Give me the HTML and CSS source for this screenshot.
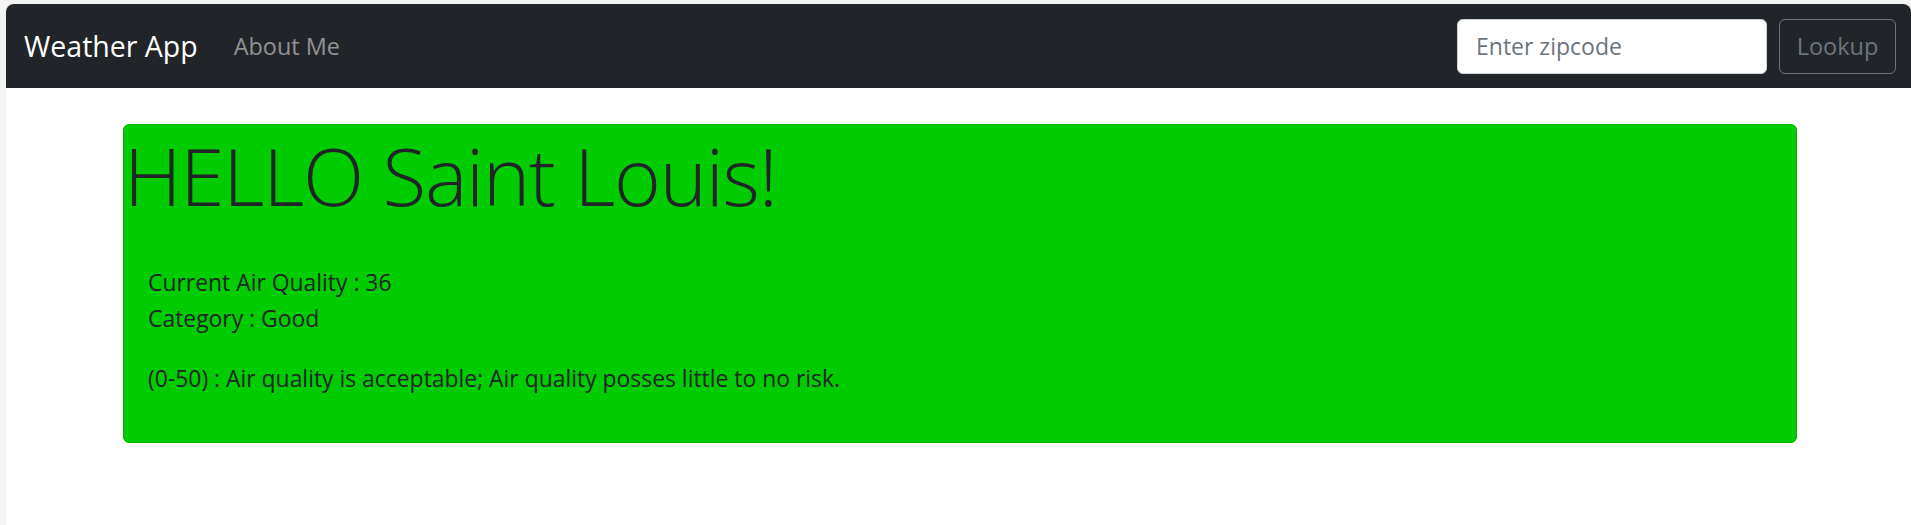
FILE: index.html
```html
<!DOCTYPE html>
<html lang="en">
<head>
<meta charset="utf-8">
<title>Weather App</title>
<link rel="stylesheet" href="styles.css">
</head>
<body>
<div class="window">
  <nav class="navbar">
    <div class="nav-left">
      <a class="brand" href="#">Weather App</a>
      <a class="nav-link" href="#">About Me</a>
    </div>
    <form class="search">
      <input class="zip" type="text" placeholder="Enter zipcode">
      <button class="lookup" type="button">Lookup</button>
    </form>
  </nav>
  <main class="container">
    <section class="card">
      <h1 class="greeting">HELLO Saint Louis!</h1>
      <div class="card-body">
        <p class="stats">Current Air Quality : 36<br>Category : Good</p>
        <p class="desc">(0-50) : Air quality is acceptable; Air quality posses little to no risk.</p>
      </div>
    </section>
  </main>
</div>
</body>
</html>
```

FILE: styles.css
```css
html, body {
  margin: 0;
  padding: 0;
}
body {
  background: #f3f3f3;
  font-family: "Open Sans", "Noto Sans", sans-serif;
  color: #212529;
  height: 525px;
  overflow: hidden;
}
.window {
  margin: 4px 0 0 6px;
  background: #ffffff;
  border-radius: 8px 8px 0 0;
  height: 521px;
  overflow: hidden;
}
.navbar {
  height: 84px;
  background: #212529;
  display: flex;
  align-items: center;
  justify-content: space-between;
  padding: 0 15px 0 18px;
  box-sizing: border-box;
}
.nav-left {
  display: flex;
  align-items: center;
  gap: 36px;
}
.brand {
  color: #ffffff;
  font-size: 28.5px;
  text-decoration: none;
  line-height: 1.5;
}
.nav-link {
  color: rgba(255, 255, 255, 0.5);
  font-size: 23.4px;
  text-decoration: none;
}
.search {
  display: flex;
  align-items: center;
  gap: 12px;
  margin: 0;
}
.zip {
  width: 310px;
  height: 55px;
  box-sizing: border-box;
  border: 1.5px solid #ced4da;
  border-radius: 6px;
  background: #ffffff;
  padding: 0 18px;
  font-family: inherit;
  font-size: 23px;
  color: #495057;
  outline: none;
}
.zip::placeholder {
  color: #6c757d;
}
.lookup {
  width: 117px;
  height: 55px;
  box-sizing: border-box;
  border: 1.5px solid #6c757d;
  border-radius: 6px;
  background: transparent;
  color: #6c757d;
  font-family: inherit;
  font-size: 23.5px;
  padding: 0;
}
.container {
  padding: 36px 0 0 117px;
}
.card {
  width: 1674px;
  height: 319px;
  box-sizing: border-box;
  background: #00cc00;
  border: 1.5px solid #00b300;
  border-radius: 6px;
}
.greeting {
  margin: 0 0 12px;
  font-size: 80px;
  font-weight: 300;
  letter-spacing: -1.2px;
  line-height: 1.25;
  padding-left: 0;
}
.card-body {
  padding: 28px 24px 0;
}
.card-body p {
  margin: 0 0 24px;
  font-size: 22.9px;
  line-height: 36px;
}
```
